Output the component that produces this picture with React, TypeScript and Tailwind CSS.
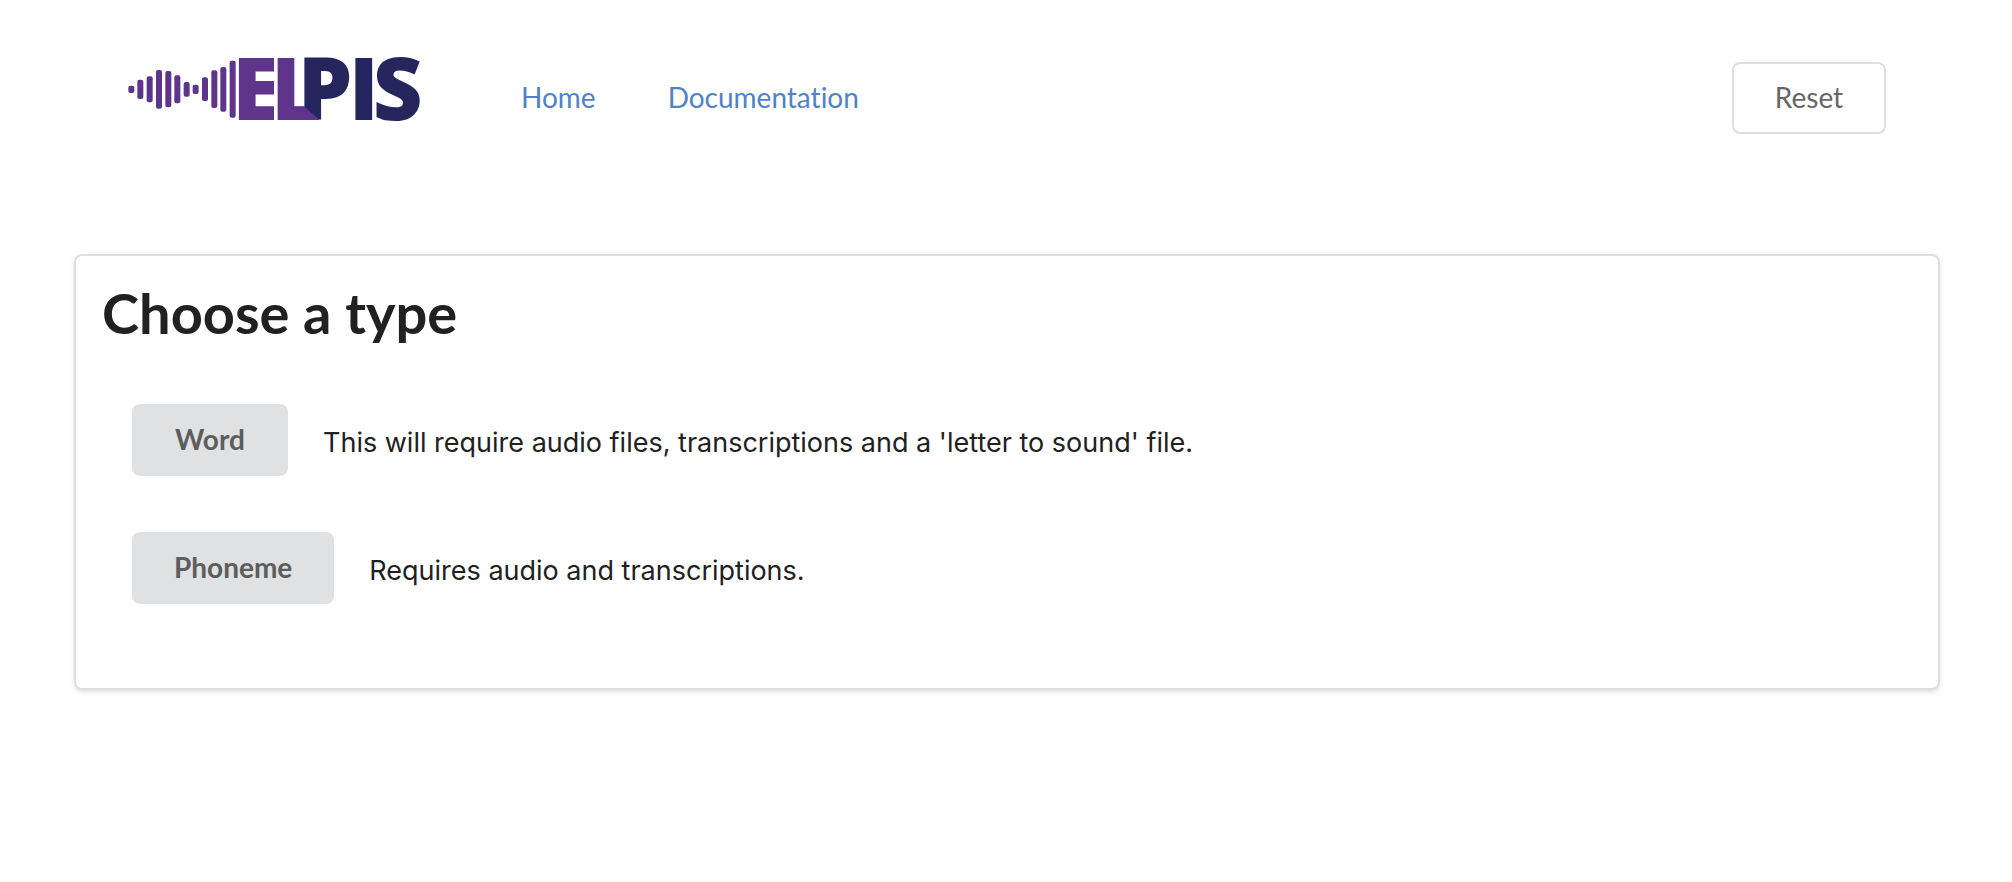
const bars = [
  { x: 1, y: 89, h: 22 },
  { x: 28, y: 71, h: 58 },
  { x: 56, y: 61, h: 78 },
  { x: 84, y: 42, h: 116 },
  { x: 112, y: 45, h: 109 },
  { x: 139, y: 58, h: 84 },
  { x: 167, y: 78, h: 44 },
  { x: 194, y: 86, h: 28 },
  { x: 222, y: 64, h: 71 },
  { x: 250, y: 43, h: 113 },
  { x: 277, y: 33, h: 134 },
  { x: 305, y: 14, h: 171 },
];

const types = [
  {
    id: 'word',
    name: 'Word',
    description: "This will require audio files, transcriptions and a 'letter to sound' file.",
  },
  { id: 'phoneme', name: 'Phoneme', description: 'Requires audio and transcriptions.' },
];

function Logo() {
  return (
    <svg viewBox="0 0 879 198" className="h-[66px] w-[293px] overflow-visible" role="img" aria-label="Elpis">
      {bars.map((bar) => (
        <rect key={bar.x} x={bar.x} y={bar.y} width="18" height={bar.h} rx="6" fill="#5f358c" />
      ))}
      <text y="192" fontFamily="Open Sans, sans-serif" fontWeight="800" fontSize="259" fill="#25265e">
        <tspan x="313 429" fill="#5f358c">EL</tspan>
        <tspan x="509 662 734">PIS</tspan>
      </text>
      <rect x="438" y="0" width="9" height="198" fill="#ffffff" />
      <path d="M490 151 H528 L575 192 H490 Z" fill="#5f358c" />
    </svg>
  );
}

export default function App() {
  return (
    <div className="bg-white pt-14 pr-[72px] pb-14 pl-[74px] font-[Lato,sans-serif] text-[28px] leading-7 text-[#212121] [font-variant-ligatures:none]">
      <header className="flex items-start px-[54px]">
        <a href="#home">
          <Logo />
        </a>
        <nav className="ml-[100px] flex gap-[72px] pt-[27px] text-[#4f83c4]">
          <a href="#home">Home</a>
          <a href="#documentation">Documentation</a>
        </nav>
        <button
          type="button"
          className="mt-1.5 ml-auto min-w-[154px] rounded-lg border-2 border-[#dededf] bg-white px-10 pt-[19px] pb-[21px] text-[#666666]"
        >
          Reset
        </button>
      </header>

      <main className="mt-[120px] rounded-lg border-2 border-[#dededf] px-[26px] pt-[25px] pb-[84px] shadow-[0_2px_4px_0_rgba(34,36,38,0.15)]">
        <h1 className="text-[56px] leading-[64px] font-bold">Choose a type</h1>
        <ul className="mt-[59px] flex flex-col gap-14 px-[30px]">
          {types.map((type) => (
            <li key={type.id} className="flex items-center gap-[35px]">
              <button
                type="button"
                aria-describedby={type.id}
                className="min-w-[156px] rounded-lg bg-[#e0e1e2] px-[42px] pt-[21px] pb-[23px] font-bold text-[#5c5d5d]"
              >
                {type.name}
              </button>
              <span id={type.id} className="pt-1.5 font-[Inter,sans-serif] text-[27px]">
                {type.description}
              </span>
            </li>
          ))}
        </ul>
      </main>
    </div>
  );
}
